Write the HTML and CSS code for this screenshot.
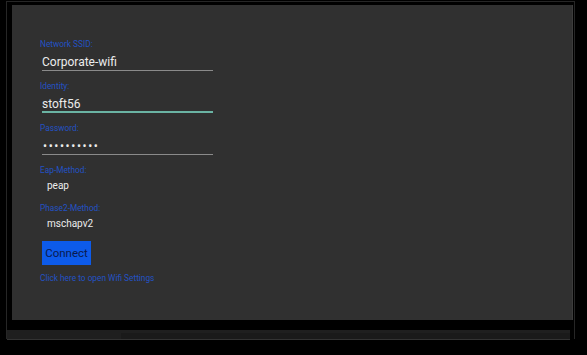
FILE: index.html
```html
<!DOCTYPE html>
<html>
<head>
<meta charset="utf-8">
<link rel="stylesheet" href="styles.css">
</head>
<body>
<div class="frame">
  <div class="screen">
    <form class="form">
      <div class="label">Network SSID:</div>
      <div class="input">Corporate-wifi</div>
      <div class="label gap">Identity:</div>
      <div class="input focused">stoft56</div>
      <div class="label gap">Password:</div>
      <div class="input dots">••••••••••</div>
      <div class="label gap">Eap-Method:</div>
      <div class="value">peap</div>
      <div class="label gap2">Phase2-Method:</div>
      <div class="value">mschapv2</div>
      <div class="btn-row"><span class="btn">Connect</span></div>
      <div class="link">Click here to open Wifi Settings</div>
    </form>
  </div>
  <div class="stand"><div class="stand-inner"></div></div>
</div>
</body>
</html>
```

FILE: styles.css
```css
html, body {
  margin: 0;
  padding: 0;
  background: #000;
  width: 587px;
  height: 355px;
  overflow: hidden;
  font-family: Roboto, "Liberation Sans", sans-serif;
}
.frame {
  margin: 1px 0 0 6px;
  width: 569px;
  height: 338px;
  border: 1px solid #262626;
  border-bottom: none;
  padding: 3px 4px 0 5px;
  box-sizing: border-box;
}
.screen {
  width: 561px;
  height: 315px;
  background: #303030;
  border-right: 1px solid #3c3c3c;
  box-sizing: border-box;
  padding: 33px 0 0 28px;
}
.form {
  display: flex;
  flex-direction: column;
  align-items: flex-start;
  margin: 0;
}
.label {
  font-size: 8.3px;
  line-height: 12px;
  height: 12px;
  color: #2352c4;
}
.gap { margin-top: 9px; }
.gap2 { margin-top: 6px; }
.input {
  margin-left: 2px;
  width: 171px;
  height: 20px;
  border-bottom: 1px solid #8a8a8a;
  color: #ececec;
  font-size: 12px;
  line-height: 24px;
  overflow: hidden;
}
.input.focused {
  border-bottom: 2px solid #6ab3a3;
  height: 19px;
}
.input.dots {
  font-size: 12px;
  letter-spacing: 1.6px;
  padding-left: 1px;
  width: 170px;
}
.value {
  margin-left: 7px;
  height: 20px;
  line-height: 20px;
  font-size: 10px;
  color: #ececec;
}
.btn-row {
  margin-top: 7px;
  margin-left: 2px;
}
.btn {
  display: block;
  width: 49px;
  height: 24px;
  line-height: 24px;
  background: #0d5bea;
  color: #0a1a4e;
  font-size: 11.5px;
  text-align: center;
}
.link {
  margin-top: 7px;
  font-size: 8.3px;
  line-height: 12px;
  color: #2352c4;
}
.stand {
  margin-top: 10px;
  margin-left: -5px;
  height: 10px;
  background: #1f1f1f;
  border-bottom: 1px solid #333;
  box-sizing: border-box;
}
.stand-inner {
  margin-left: 114px;
  height: 6px;
  position: relative;
  top: 3px;
  background: #1a1a1a;
}
```
